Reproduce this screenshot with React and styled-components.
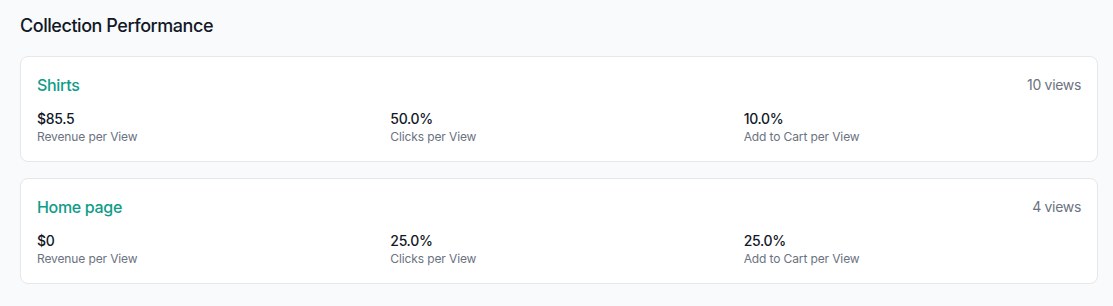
import React from "react";
import styled, { createGlobalStyle } from "styled-components";

const Global = createGlobalStyle`
  html, body { margin: 0; padding: 0; background: #f9fafb; }
  body { font-family: Inter, "Noto Sans", sans-serif; -webkit-font-smoothing: antialiased; letter-spacing: -0.02em; }
  * { box-sizing: border-box; }
`;

const Page = styled.div`
  padding: 12px 15px 20px 20px;
  background: #f9fafb;
`;

const Title = styled.h2`
  margin: 0 0 16px;
  font-size: 18px;
  line-height: 28px;
  font-weight: 500;
  color: #111827;
  letter-spacing: -0.025em;
`;

const List = styled.div`
  display: flex;
  flex-direction: column;
  gap: 16px;
`;

const Card = styled.div`
  background: #fff;
  border: 1px solid #e5e7eb;
  border-radius: 8px;
  padding: 16px;
`;

const Header = styled.div`
  display: flex;
  justify-content: space-between;
  align-items: center;
  margin-bottom: 12px;
`;

const Name = styled.div`
  font-size: 16px;
  line-height: 24px;
  font-weight: 500;
  color: #0e9c89;
`;

const Views = styled.div`
  font-size: 14px;
  line-height: 20px;
  color: #6b7280;
`;

const Metrics = styled.div`
  display: grid;
  grid-template-columns: repeat(3, 1fr);
  gap: 16px;
`;

const Value = styled.div`
  font-size: 14px;
  line-height: 20px;
  font-weight: 500;
  color: #111827;
`;

const Label = styled.div`
  font-size: 12px;
  line-height: 16px;
  color: #6b7280;
  letter-spacing: -0.01em;
`;

const data = [
  { name: "Shirts", views: "10 views", rev: "$85.5", clicks: "50.0%", cart: "10.0%" },
  { name: "Home page", views: "4 views", rev: "$0", clicks: "25.0%", cart: "25.0%" },
];

export default function App() {
  return (
    <>
      <Global />
      <Page>
        <Title>Collection Performance</Title>
        <List>
          {data.map((d) => (
            <Card key={d.name}>
              <Header>
                <Name>{d.name}</Name>
                <Views>{d.views}</Views>
              </Header>
              <Metrics>
                <div>
                  <Value>{d.rev}</Value>
                  <Label>Revenue per View</Label>
                </div>
                <div>
                  <Value>{d.clicks}</Value>
                  <Label>Clicks per View</Label>
                </div>
                <div>
                  <Value>{d.cart}</Value>
                  <Label>Add to Cart per View</Label>
                </div>
              </Metrics>
            </Card>
          ))}
        </List>
      </Page>
    </>
  );
}
